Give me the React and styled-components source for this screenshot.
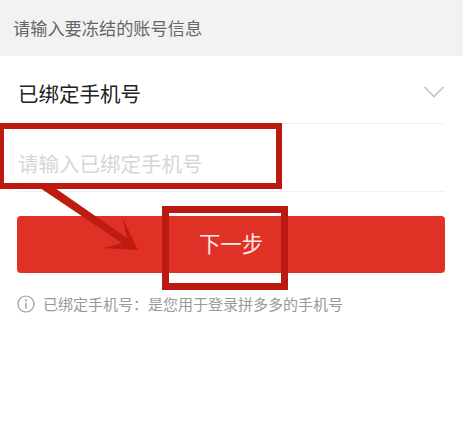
import React from "react";
import styled, { createGlobalStyle } from "styled-components";

const GlobalStyle = createGlobalStyle`
  html, body {
    margin: 0;
    padding: 0;
    background: #fff;
  }
  body {
    font-family: "Liberation Sans", "Noto Sans CJK SC", sans-serif;
  }
`;

const Page = styled.div`
  position: relative;
  width: 463px;
  height: 432px;
  overflow: hidden;
  background: #fff;
`;

const Header = styled.div`
  height: 56px;
  padding: 0 0 1px 13px;
  box-sizing: border-box;
  display: flex;
  align-items: center;
  background: #f2f2f2;
  color: #666;
  font-size: 17.2px;
`;

const Form = styled.div`
  padding: 0 18px 0 18px;
`;

const Row = styled.div`
  height: ${(p) => p.$height}px;
  display: flex;
  align-items: center;
  justify-content: space-between;
  border-bottom: 1px solid #f1f1f1;
  box-sizing: border-box;
  font-size: 20.5px;
  color: ${(p) => p.$color};
`;

const SelectLabel = styled.span`
  margin-top: 6px;
`;

const Placeholder = styled.span`
  margin-top: 10px;
`;

const Chevron = styled.svg`
  width: 22px;
  height: 14px;
  margin-top: 4px;
`;

const NextButton = styled.button`
  display: flex;
  align-items: center;
  justify-content: center;
  width: 428px;
  height: 57px;
  margin: 24px 0 0 -1px;
  padding: 0 0 5px;
  border: none;
  border-radius: 4px;
  background: #e03127;
  color: #fde9e7;
  font-family: inherit;
  font-size: 21.4px;
`;

const Hint = styled.div`
  display: flex;
  align-items: center;
  gap: 8px;
  margin: 20px 0 0 -1px;
  color: #999;
  font-size: 15px;
`;

const InfoIcon = styled.svg`
  width: 18px;
  height: 18px;
  flex: none;
`;

// red markup drawn on top of the screenshot
const MarkBox = styled.div`
  position: absolute;
  left: ${(p) => p.$left}px;
  top: ${(p) => p.$top}px;
  width: ${(p) => p.$width}px;
  height: ${(p) => p.$height}px;
  box-sizing: border-box;
  border: ${(p) => p.$border}px solid #bb1a10;
`;

const MarkArrow = styled.svg`
  position: absolute;
  left: 0;
  top: 0;
  width: 463px;
  height: 432px;
  pointer-events: none;
`;

export default function App() {
  return (
    <Page>
      <GlobalStyle />
      <Header>请输入要冻结的账号信息</Header>
      <Form>
        <Row $height={68} $color="#222">
          <SelectLabel>已绑定手机号</SelectLabel>
          <Chevron viewBox="0 0 22 14" fill="none">
            <path d="M1.5 2 L11 11.5 L20.5 2" stroke="#c4c4c4" strokeWidth="1.6" />
          </Chevron>
        </Row>
        <Row $height={68} $color="#d6d6d6">
          <Placeholder>请输入已绑定手机号</Placeholder>
        </Row>
        <NextButton>下一步</NextButton>
        <Hint>
          <InfoIcon viewBox="0 0 18 18" fill="none">
            <circle cx="9" cy="9" r="8" stroke="#999" strokeWidth="1.2" />
            <circle cx="9" cy="5.2" r="1" fill="#999" />
            <path d="M9 7.8 V13.4" stroke="#999" strokeWidth="1.4" />
          </InfoIcon>
          已绑定手机号：是您用于登录拼多多的手机号
        </Hint>
      </Form>
      <MarkBox $left={-2} $top={123} $width={284} $height={66} $border={6} />
      <MarkBox $left={162} $top={206} $width={126} $height={84} $border={7} />
      <MarkArrow viewBox="0 0 463 432">
        <path
          d="M40 188 L55 188 L127 238 L122 217 L138 250 L103 248 L122 243 Z"
          fill="#c01b10"
        />
      </MarkArrow>
    </Page>
  );
}
